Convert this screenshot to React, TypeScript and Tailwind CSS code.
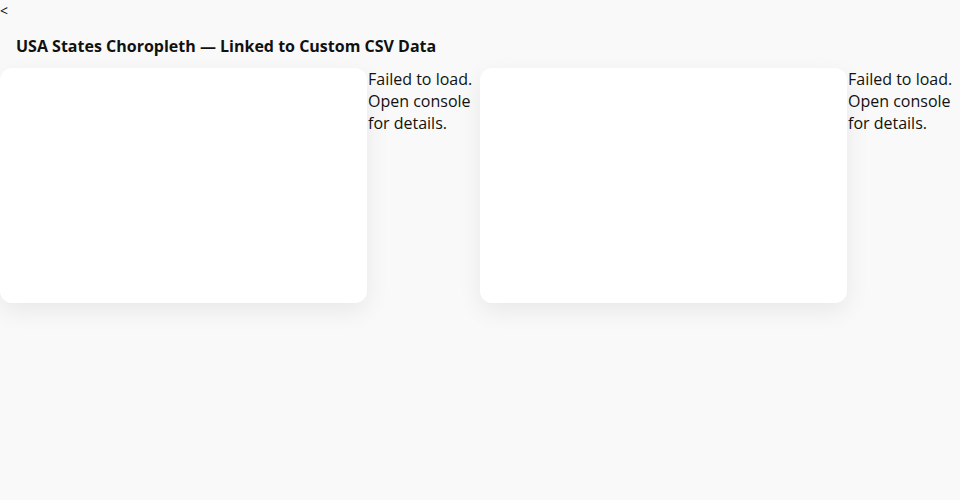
export default function App() {
  const panels = [0, 1];
  return (
    <div
      className="min-h-[500px] bg-[#f9f9f9] text-[#111]"
      style={{ fontFamily: '"Open Sans", sans-serif' }}
    >
      <div className="h-[22px] text-sm leading-[22px]">&lt;</div>
      <h1 className="px-4 pt-[13px] text-base font-bold leading-[22px]">
        USA States Choropleth — Linked to Custom CSV Data
      </h1>
      <div className="mt-[11px] grid grid-cols-2">
        {panels.map((p) => (
          <div key={p} className="flex">
            <div className="h-[235px] w-[367px] rounded-xl bg-white shadow-[0_8px_24px_rgba(0,0,0,0.07)]" />
            <div className="w-[113px] pl-px text-base leading-[22px]">
              Failed to load. Open console for details.
            </div>
          </div>
        ))}
      </div>
    </div>
  );
}
